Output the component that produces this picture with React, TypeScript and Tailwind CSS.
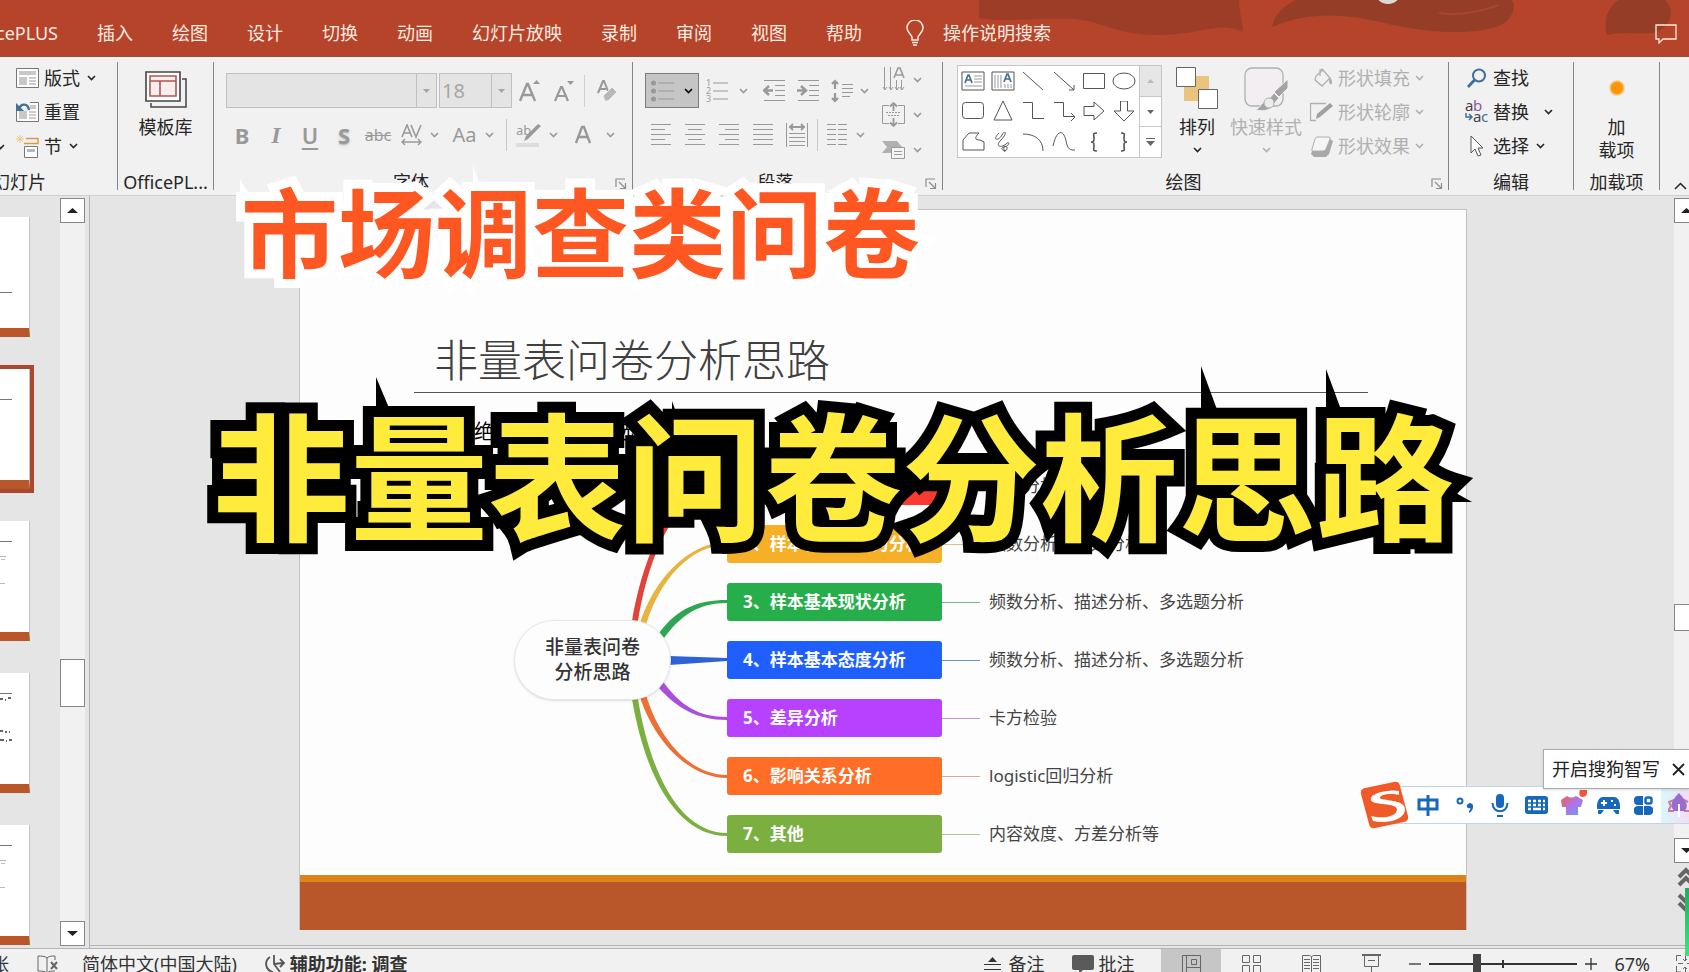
import type { ReactNode } from "react";
import clsx from "clsx";

const tabs = [
  "插入",
  "绘图",
  "设计",
  "切换",
  "动画",
  "幻灯片放映",
  "录制",
  "审阅",
  "视图",
  "帮助",
];

const branches = [
  { title: "1、样本背景信息分析", leaf: "频数分析", box: "bg-[#f93a31]", line: "bg-[#e08078]" },
  { title: "2、样本特征、行为分析", leaf: "频数分析、描述分析", box: "bg-[#f5b027]", line: "bg-[#e0c07a]" },
  { title: "3、样本基本现状分析", leaf: "频数分析、描述分析、多选题分析", box: "bg-[#25ae4a]", line: "bg-[#6cbb88]" },
  { title: "4、样本基本态度分析", leaf: "频数分析、描述分析、多选题分析", box: "bg-[#1f5fff]", line: "bg-[#6b93c8]" },
  { title: "5、差异分析", leaf: "卡方检验", box: "bg-[#b840ff]", line: "bg-[#c793d6]" },
  { title: "6、影响关系分析", leaf: "logistic回归分析", box: "bg-[#ff6d26]", line: "bg-[#e3a58c]" },
  { title: "7、其他", leaf: "内容效度、方差分析等", box: "bg-[#7bb041]", line: "bg-[#adc690]" },
];

const curves = [
  { fill: "#e0433a", d: "M3 154C17 72 50 17 98 17v3C53 20 22 75 9 154z" },
  { fill: "#e8b440", d: "M11 156C25 112 60 75 98 75v3C62 78 31 112 17 158z" },
  { fill: "#2ea654", d: "M30 166C48 142 68 133 98 133v3C70 136 51 148 33 174z" },
  { fill: "#2f62d8", d: "M40 189L98 191v3L40 198z" },
  { fill: "#a94fdc", d: "M33 213C51 239 70 250 98 250v3C68 253 48 241 30 221z" },
  { fill: "#ec7036", d: "M17 228C31 274 62 308 98 308v3C60 311 25 274 11 230z" },
  { fill: "#7bb041", d: "M9 232C22 311 53 366 98 366v3C50 369 17 314 3 232z" },
];

function Svg({
  w,
  h,
  children,
  className,
}: {
  w: number;
  h: number;
  children: ReactNode;
  className?: string;
}) {
  return (
    <svg
      width={w}
      height={h}
      viewBox={`0 0 ${w} ${h}`}
      fill="none"
      stroke="currentColor"
      aria-hidden="true"
      className={clsx("shrink-0", className)}
    >
      {children}
    </svg>
  );
}

function Chevron({ className }: { className?: string }) {
  return (
    <Svg w={9} h={6} className={className}>
      <path d="M1 1l3.500 3.500L8 1" strokeWidth="1.600" />
    </Svg>
  );
}

function Launcher() {
  return (
    <button aria-label="更多选项" className="text-[#8c8c8c]">
      <Svg w={12} h={12}>
        <path d="M1 9V1h9M4 4l6 6M10.500 5v5.500H5" strokeWidth="1.200" />
      </Svg>
    </button>
  );
}

function Group({
  label,
  className,
  launcher,
  children,
}: {
  label: string;
  className?: string;
  launcher?: boolean;
  children: ReactNode;
}) {
  return (
    <section
      className={clsx(
        "relative flex h-32 shrink-0 flex-col border-r border-[#858585]",
        className,
      )}
    >
      <div className="flex min-h-0 flex-1">{children}</div>
      <h2
        className={clsx(
          "text-center text-lg leading-4 whitespace-nowrap",
          launcher && "pr-6",
        )}
      >
        {label}
      </h2>
      {launcher && (
        <div className="absolute right-[5px] bottom-0 flex">
          <Launcher />
        </div>
      )}
    </section>
  );
}

function IconButton({
  label,
  className,
  children,
}: {
  label: string;
  className?: string;
  children: ReactNode;
}) {
  return (
    <button
      aria-label={label}
      className={clsx(
        "flex h-8 shrink-0 items-center justify-center gap-2",
        className,
      )}
    >
      {children}
    </button>
  );
}

function MenuItem({
  icon,
  label,
  chevron,
}: {
  icon: ReactNode;
  label: string;
  chevron?: string;
}) {
  return (
    <button className="flex h-8 items-center gap-[5px] text-lg whitespace-nowrap">
      <span className="flex w-[23px] justify-center">{icon}</span>
      {label}
      {chevron && <Chevron className={chevron} />}
    </button>
  );
}

function Combo({
  label,
  value,
  className,
}: {
  label: string;
  value: string;
  className: string;
}) {
  return (
    <div
      className={clsx(
        "relative flex h-[35px] shrink-0 border border-[#c0c0c0] bg-[#e4e4e4]",
        className,
      )}
    >
      <select
        aria-label={label}
        disabled
        className="w-full appearance-none bg-transparent pl-0.5 text-xl text-[#a6a6a6] opacity-100"
      >
        <option>{value}</option>
      </select>
      <span className="pointer-events-none absolute inset-y-0 right-0 flex w-5 items-center justify-center border-l border-[#c0c0c0] text-[#a6a6a6]">
        <Svg w={7} h={4}>
          <path d="M0 0h7L3.500 4z" fill="currentColor" stroke="none" />
        </Svg>
      </span>
    </div>
  );
}

function Lines({ rows }: { rows: [number, number][] }) {
  return (
    <Svg w={22} h={22}>
      {rows.map(([from, to], i) => (
        <path key={i} d={`M${from} ${i * 5 + 0.5}H${to}`} />
      ))}
    </Svg>
  );
}

function TitleBar() {
  return (
    <header className="relative flex h-[57px] shrink-0 items-center overflow-hidden border-b border-[#98503f] bg-[#b5442a] text-lg whitespace-nowrap text-[#fdeae0]">
      <svg
        width="720"
        height="57"
        viewBox="0 0 720 57"
        className="absolute top-0 right-0"
        aria-hidden="true"
      >
        <g fill="#963d27">
          <path d="M10 0h260c0 12 4 20 4 32-24-12-42 4-90 3-40-1-50-14-80-16-34-2-70 4-94-1z" opacity=".8" />
          <path d="M303 27C306 12 316 6 326 0h216c6 4 2 18-8 24-24 12-74 9-110 1-40-10-80-16-121 2z" />
          <path d="M638 35c-4-14 0-28 12-35h46c10 10 6 22-2 28-8 10-36 2-56 7z" />
        </g>
        <path d="M470 13c24 3 42-2 60-8" stroke="#a84630" strokeWidth="2" fill="none" />
        <circle cx="419" cy="-9" r="13" fill="#dcd8d6" />
      </svg>
      <nav className="relative flex items-center pt-2.5">
        <a href="#home" className="flex w-[58px] justify-end">
          OfficePLUS
        </a>
        {tabs.map((tab) => (
          <a key={tab} href={`#${tab}`} className="ml-[39px]">
            {tab}
          </a>
        ))}
        <a href="#search" className="ml-11 flex items-center gap-[19px]">
          <Svg w={18} h={26}>
            <path
              d="M6 20v-3C5 14 1 12 1 8a8 8 0 0116 0c0 4-4 6-5 9v3zM6 22.500h6M7 25h4"
              strokeWidth="1.500"
            />
          </Svg>
          操作说明搜索
        </a>
      </nav>
      <button aria-label="批注" className="relative mt-3 mr-3 ml-auto">
        <Svg w={22} h={20}>
          <path d="M1 1h20v14H8l-4 4v-4H1z" strokeWidth="1.300" />
        </Svg>
      </button>
    </header>
  );
}

function SlideIcon({ children }: { children?: ReactNode }) {
  return (
    <Svg w={23} h={20}>
      <path d="M.500.500h22v19H.500z" fill="#fff" stroke="#777" />
      <path d="M3 3h17v4H3zM3 9h8v8H3z" fill="#c8c8c8" stroke="none" />
      <path d="M13 10h7M13 13h7M13 16h7" stroke="#999" />
      {children}
    </Svg>
  );
}

function FontGroup() {
  return (
    <Group label="字体" className="w-[419px]" launcher>
      <div className="flex flex-col pt-[11px] text-[#999]">
        <div className="flex items-center pl-3">
          <Combo label="字体" value="" className="w-[211px]" />
          <Combo label="字号" value="18" className="ml-0.5 w-[73px]" />
          <IconButton label="增大字号" className="w-9">
            <Svg w={22} h={24}>
              <path d="M1 22L8 5h1l7 17M4 16h10" strokeWidth="2.400" />
              <path d="M14 5l3.500-4L21 5z" fill="currentColor" stroke="none" />
            </Svg>
          </IconButton>
          <IconButton label="减小字号" className="w-8">
            <Svg w={20} h={24}>
              <path d="M1 22L7 8h1l6 14M4 17h8" strokeWidth="2.200" />
              <path d="M13 2h7l-3.500 4z" fill="currentColor" stroke="none" />
            </Svg>
          </IconButton>
          <span className="ml-1 h-8 w-px bg-[#d0d0d0]" />
          <IconButton label="清除格式" className="w-11">
            <Svg w={20} h={22}>
              <path d="M1 13L6 1h1l4 10M3 9h6" strokeWidth="2" />
              <path d="M6 16l9-9 5 5-9 9H8z" fill="#b8b8b8" stroke="#f1f1f1" />
            </Svg>
          </IconButton>
        </div>
        <div className="mt-[11px] flex items-center pl-[11px]">
          <IconButton label="加粗" className="w-[34px] text-[22px] font-bold">
            B
          </IconButton>
          <IconButton
            label="倾斜"
            className="w-[34px] font-['Liberation_Serif',serif] text-2xl font-bold italic"
          >
            I
          </IconButton>
          <IconButton
            label="下划线"
            className="w-[34px] text-[22px] font-semibold underline underline-offset-4"
          >
            U
          </IconButton>
          <IconButton
            label="阴影"
            className="w-[34px] text-[22px] font-bold text-shadow-md"
          >
            S
          </IconButton>
          <IconButton label="删除线" className="w-[34px] text-base line-through">
            abc
          </IconButton>
          <IconButton label="字符间距" className="w-[50px]">
            <Svg w={21} h={22}>
              <path d="M1 13L6 1l5 12M3 9h6M10 1l5 12 5-12" strokeWidth="1.600" />
              <path d="M1 18h19M4 15l-3 3 3 3M17 15l3 3-3 3" strokeWidth="1.400" />
            </Svg>
            <Chevron />
          </IconButton>
          <IconButton label="更改大小写" className="w-14 gap-1.5 text-xl">
            Aa
            <Chevron />
          </IconButton>
          <span className="ml-[5px] h-8 w-px bg-[#c8c8c8]" />
          <IconButton label="突出显示" className="ml-2 w-11">
            <Svg w={25} h={24}>
              <text x="0" y="12" fontSize="13" fill="currentColor" stroke="none">
                ab
              </text>
              <path d="M22 1l3 2-13 13-4 2 2-5z" fill="currentColor" stroke="none" />
              <path d="M0 20h23v4H0z" fill="#ddd" stroke="none" />
            </Svg>
            <Chevron />
          </IconButton>
          <IconButton label="字体颜色" className="ml-3.5 gap-[15px] pl-0.5">
            <Svg w={16} h={22}>
              <path d="M1 19L7 3h2l6 16M4 13h8" strokeWidth="2.400" />
            </Svg>
            <Chevron />
          </IconButton>
        </div>
      </div>
    </Group>
  );
}

function ParagraphGroup() {
  return (
    <Group label="段落" className="w-[310px]" launcher>
      <div className="flex flex-col pt-[11px] text-[#999]">
        <div className="flex h-[35px] items-center pl-3">
          <button
            aria-label="项目符号"
            className="flex h-[35px] w-[54px] items-center justify-center gap-2.5 border border-[#7c7c7c] bg-[#c5c5c5]"
          >
            <Svg w={23} h={22}>
              <path d="M7 3h16M7 11h16M7 19h16" />
              <g fill="currentColor" stroke="none">
                <circle cx="2.500" cy="3" r="2.500" />
                <circle cx="2.500" cy="11" r="2.500" />
                <circle cx="2.500" cy="19" r="2.500" />
              </g>
            </Svg>
            <Chevron className="text-black" />
          </button>
          <IconButton label="编号" className="ml-[7px] gap-[11px]">
            <Svg w={22} h={24}>
              <path d="M7 4h15M7 12h15M7 20h15" />
              <g fontSize="9" fill="currentColor" stroke="none">
                <text x="0" y="7">1</text>
                <text x="0" y="15">2</text>
                <text x="0" y="23">3</text>
              </g>
            </Svg>
            <Chevron />
          </IconButton>
          <IconButton label="减少缩进" className="ml-[15px]">
            <Svg w={22} h={22}>
              <path d="M1 .500h21M12 5.500h10M12 10.500h10M12 15.500h10M1 20.500h21" />
              <path d="M10 10.500H2M6 6l-5 4.500L6 15" strokeWidth="2.500" />
            </Svg>
          </IconButton>
          <IconButton label="增加缩进" className="ml-3">
            <Svg w={22} h={22}>
              <path d="M1 .500h21M12 5.500h10M12 10.500h10M12 15.500h10M1 20.500h21" />
              <path d="M0 10.500h8M4 6l5 4.500L4 15" strokeWidth="2.500" />
            </Svg>
          </IconButton>
          <IconButton label="行距" className="ml-3 gap-[7px]">
            <Svg w={22} h={24}>
              <path d="M11 5.500h11M11 9.500h11M11 13.500h11M11 17.500h8" />
              <path d="M4 2v8M1 5l3-3 3 3M4 14v8M1 19l3 3 3-3" strokeWidth="2.200" />
            </Svg>
            <Chevron />
          </IconButton>
        </div>
        <div className="mt-[11px] flex items-center pl-[11px]">
          <IconButton label="左对齐" className="w-[34px]">
            <Lines rows={[[1, 21], [1, 15], [1, 21], [1, 15], [1, 21]]} />
          </IconButton>
          <IconButton label="居中" className="w-[34px]">
            <Lines rows={[[1, 21], [4, 18], [1, 21], [4, 18], [1, 21]]} />
          </IconButton>
          <IconButton label="右对齐" className="w-[34px]">
            <Lines rows={[[1, 21], [7, 21], [1, 21], [7, 21], [1, 21]]} />
          </IconButton>
          <IconButton label="两端对齐" className="w-[34px]">
            <Lines rows={[[1, 21], [1, 21], [1, 21], [1, 21], [1, 21]]} />
          </IconButton>
          <IconButton label="分散对齐" className="w-[34px]">
            <Svg w={22} h={24}>
              <path d="M.500 0v24M21.500 0v24M3 10.500h16M3 14.500h16M3 18.500h16M3 22.500h16" />
              <path d="M3 4h16M7 1L4 4l3 3M15 1l3 3-3 3" strokeWidth="1.800" />
            </Svg>
          </IconButton>
          <span className="ml-[3px] h-8 w-px bg-[#c8c8c8]" />
          <IconButton label="分栏" className="ml-2">
            <Svg w={22} h={22}>
              <path d="M1 .500h9M12 .500h9M1 5.500h9M12 5.500h9M1 10.500h9M12 10.500h9M1 15.500h9M12 15.500h9M1 20.500h9M12 20.500h9" />
            </Svg>
            <Chevron />
          </IconButton>
        </div>
      </div>
      <div className="ml-auto flex flex-col pr-5 text-[#999]">
        <IconButton label="文字方向" className="h-[35px]">
          <Svg w={23} h={25}>
            <path d="M2.500 0v23M8.500 0v23M14.500 13v10M19.500 13v10M1 20l2 3 2-3M7 20l2 3 2-3M13 20l2 3 2-3M18 20l2 3 2-3" />
            <path d="M12 11l4-10h2l4 10M14 8h6" strokeWidth="1.600" />
          </Svg>
          <Chevron />
        </IconButton>
        <IconButton label="对齐文本" className="h-[35px]">
          <Svg w={23} h={25}>
            <path d="M7 3.500H.500v18H7M16 3.500h6.500v18H16" />
            <path d="M4 10.500h15M6 13.500h11" strokeDasharray="2 1" />
            <path d="M11.500 1v8M8 4.500L11.500 1 15 4.500M11.500 16v8M8 20.500l3.500 3.500 3.500-3.500" strokeWidth="1.800" />
          </Svg>
          <Chevron />
        </IconButton>
        <IconButton label="转换为 SmartArt" className="h-[35px]">
          <Svg w={23} h={20}>
            <path d="M0 1h15l5 6-5 6H0l5-6z" fill="#b0b0b0" stroke="none" />
            <path d="M9.500 7.500h13v11h-13z" fill="#f4f4f4" />
            <path d="M12 11.500h8M12 14.500h8" />
          </Svg>
          <Chevron />
        </IconButton>
      </div>
    </Group>
  );
}

const shapes: { name: string; icon: ReactNode }[] = [
  {
    name: "文本框",
    icon: (
      <>
        <path d="M1 1h22v18H1z" fill="#fff" />
        <path d="M13 5h8M13 8h8M13 11h8M4 15h17" stroke="#999" />
        <path d="M4 12l3-8h1l3 8M5 9h5" stroke="#3d7195" strokeWidth="1.700" />
      </>
    ),
  },
  {
    name: "竖排文本框",
    icon: (
      <>
        <path d="M1 1h22v18H1z" fill="#fff" />
        <path d="M4 4v13M7 4v13M10 4v13M14 13v4M17 13v4M20 13v4" stroke="#999" />
        <path d="M13 11l3-8h1l3 8M14 8h5" stroke="#3d7195" strokeWidth="1.700" />
      </>
    ),
  },
  { name: "直线", icon: <path d="M2 1l20 18" /> },
  { name: "箭头", icon: <path d="M2 1l20 18M22 14v5h-5" /> },
  { name: "矩形", icon: <path d="M1.500 2.500h21v15h-21z" /> },
  { name: "椭圆", icon: <ellipse cx="12" cy="10" rx="11" ry="8" /> },
  { name: "圆角矩形", icon: <rect x="1.500" y="1.500" width="21" height="16" rx="3" /> },
  { name: "三角形", icon: <path d="M12 0l9 19H3z" /> },
  { name: "肘形连接符", icon: <path d="M2 1.500h9.500v16H23" /> },
  { name: "肘形箭头", icon: <path d="M2 1.500h9.500v14H23M19 12l4 4-4 4" /> },
  { name: "右箭头", icon: <path d="M2 5.500h10V1l10 9-10 9v-4.500H2z" /> },
  { name: "下箭头", icon: <path d="M8.500 0h7v10H22L12 20 2 10h6.500z" /> },
  { name: "任意多边形", icon: <path d="M2 8l6-7h10c-5 5-4 7 1 7l4 2v8H2z" /> },
  {
    name: "自由曲线",
    icon: <path d="M8 1c-8 8 0 8 3 2s6-2-1 5 1 8 5 4 4 2-2 3 2 6 3 2-6-4-2 3" />,
  },
  { name: "弧形", icon: <path d="M2 2c12 0 20 6 20 17" /> },
  { name: "曲线", icon: <path d="M1 14C5-4 12-2 14 9c2 9 4 9 9 9" /> },
  {
    name: "左大括号",
    icon: <path d="M15 1c-5 0-3 2-3 5s0 4-3 4c3 0 3 1 3 4s-2 5 3 5" strokeWidth="1.600" />,
  },
  {
    name: "右大括号",
    icon: <path d="M9 1c5 0 3 2 3 5s0 4 3 4c-3 0-3 1-3 4s2 5-3 5" strokeWidth="1.600" />,
  },
];

function DrawingGroup() {
  return (
    <Group label="绘图" className="w-[506px]" launcher>
      <div className="mt-[3px] ml-3.5 flex h-[93px] w-[205px] shrink-0 border border-[#c6c6c6] bg-white">
        <div className="grid flex-1 grid-cols-6 grid-rows-3 text-[#555]">
          {shapes.map((shape) => (
            <button
              key={shape.name}
              aria-label={shape.name}
              className="flex items-center justify-center"
            >
              <Svg w={24} h={20}>
                {shape.icon}
              </Svg>
            </button>
          ))}
        </div>
        <div className="flex w-[22px] flex-col divide-y divide-[#c6c6c6] border-l border-[#c6c6c6] text-[#666]">
          <button aria-label="上一行" className="flex flex-1 items-center justify-center bg-[#e6e6e6] text-[#bbb]">
            <Svg w={7} h={4}>
              <path d="M0 4h7L3.500 0z" fill="currentColor" stroke="none" />
            </Svg>
          </button>
          <button aria-label="下一行" className="flex flex-1 items-center justify-center">
            <Svg w={7} h={4}>
              <path d="M0 0h7L3.500 4z" fill="currentColor" stroke="none" />
            </Svg>
          </button>
          <button aria-label="其他形状" className="flex flex-1 items-center justify-center">
            <Svg w={9} h={8}>
              <path d="M0 .500h9" />
              <path d="M0 3h9L4.500 8z" fill="currentColor" stroke="none" />
            </Svg>
          </button>
        </div>
      </div>
      <button className="ml-3.5 flex w-[42px] shrink-0 flex-col items-center pt-[5px] text-lg whitespace-nowrap">
        <Svg w={42} h={42}>
          <path d="M20 9h13v13H20zM8 20h14v14H8z" fill="#e9c47c" stroke="none" />
          <path d="M.500.500h19v19H.500zM22.500 22.500h19v19h-19z" fill="#fff" stroke="#666" />
        </Svg>
        <span className="mt-1.5 leading-6">排列</span>
        <Chevron className="mt-2" />
      </button>
      <button className="ml-2.5 flex w-[76px] shrink-0 flex-col items-center pt-[5px] text-lg whitespace-nowrap text-[#b0b0b0]">
        <Svg w={44} h={44}>
          <rect x="1" y="1" width="38" height="38" rx="7" fill="#f3eef2" strokeWidth="1.300" />
          <path d="M44 12v9l-9 9-5-5z" fill="#a3a3a3" stroke="#f1f1f1" />
          <path d="M24 33l6-7 5 5-6 7c-4 7-12 6-17 5 5-3 6-9 12-10z" fill="#a3a3a3" stroke="#f1f1f1" />
          <circle cx="25" cy="36" r="5" fill="#ececec" />
        </Svg>
        <span className="mt-1 leading-6">快速样式</span>
        <Chevron className="mt-2" />
      </button>
      <div className="flex flex-col gap-0.5 pl-1.5 text-[#b0b0b0]">
        <MenuItem
          label="形状填充"
          chevron="ml-0"
          icon={
            <Svg w={22} h={20}>
              <path d="M5 8l7-6 7 8-8 8-7-6zM9 8V2l3-1" strokeWidth="1.300" />
              <path d="M19 10c2 3 2 5 1 6s-2-3-1-6" fill="currentColor" />
            </Svg>
          }
        />
        <MenuItem
          label="形状轮廓"
          chevron="ml-0"
          icon={
            <Svg w={23} h={20}>
              <path d="M16 1.500H.500v17H6" strokeWidth="1.300" />
              <path d="M20 1l3 3-13 11-4 2 1-5z" fill="#a0a0a0" stroke="none" />
            </Svg>
          }
        />
        <MenuItem
          label="形状效果"
          chevron="ml-0"
          icon={
            <Svg w={23} h={21}>
              <path d="M6 3h14l3 2-4 13-3 3H4l-3-3z" fill="#a8a8a8" stroke="none" />
              <path d="M7 1h12q2 0 1 2l-4 10q-1 2-3 2H3q-2 0-1-2L5 3q1-2 2-2z" fill="#f5f5f5" />
            </Svg>
          }
        />
      </div>
    </Group>
  );
}

function Ribbon() {
  return (
    <div className="flex h-[139px] shrink-0 overflow-hidden border-b border-[#cfcfcf] bg-[#f1f1f1] pt-[5px] text-[#262626]">
      <section className="flex h-32 w-[118px] shrink-0 flex-col border-r border-[#858585]">
        <div className="flex flex-1">
          <button aria-label="新建幻灯片" className="flex w-4 items-end pb-6">
            <Chevron className="-ml-1" />
          </button>
          <div className="flex flex-col items-start gap-0.5">
            <MenuItem label="版式" chevron="ml-0.5" icon={<SlideIcon />} />
            <MenuItem
              label="重置"
              icon={
                <SlideIcon>
                  <path d="M0 0h14v9H0z" fill="#f1f1f1" stroke="none" />
                  <path d="M3 7c2-6 9-6 10 1" stroke="#3d7195" strokeWidth="2.400" />
                  <path d="M0 1v8h8z" fill="#3d7195" stroke="none" />
                </SlideIcon>
              }
            />
            <MenuItem
              label="节"
              chevron="ml-0.5"
              icon={
                <Svg w={23} h={23}>
                  <path d="M4 0v8M0 4h8M1 1l6 6M7 1L1 7" stroke="#ecc889" />
                  <path d="M10 3.500h12v5H8" stroke="#d99a4e" strokeWidth="1.400" />
                  <path d="M8.500 11.500h13v11h-13z" fill="#fff" stroke="#777" />
                  <path d="M11 15.500h8" stroke="#a9bccb" strokeWidth="3" />
                </Svg>
              }
            />
          </div>
        </div>
        <h2 className="flex w-[46px] justify-end text-lg leading-4 whitespace-nowrap">
          幻灯片
        </h2>
      </section>

      <Group label="OfficePL..." className="w-24">
        <button className="flex w-full flex-col items-center pt-[9px] text-lg">
          <Svg w={42} h={37}>
            <path d="M37 8h4v28H6v-4" stroke="#444" strokeWidth="1.500" />
            <path d="M1 1h34v29H1z" fill="#fff" stroke="#444" strokeWidth="1.600" />
            <path d="M5 5h26v20H5zM5 10h26M15 10v15" fill="#f9eeee" stroke="#b2564e" strokeWidth="1.600" />
          </Svg>
          <span className="mt-[7px] leading-6">模板库</span>
        </button>
      </Group>

      <FontGroup />
      <ParagraphGroup />
      <DrawingGroup />

      <Group label="编辑" className="w-[125px]">
        <div className="flex flex-col items-start gap-0.5 pl-4">
          <MenuItem
            label="查找"
            icon={
              <Svg w={20} h={20} className="text-[#3f6f9b]">
                <circle cx="12" cy="7.500" r="6" strokeWidth="2" />
                <path d="M7.500 12L1 19" strokeWidth="2.800" />
              </Svg>
            }
          />
          <MenuItem
            label="替换"
            chevron="ml-2.5"
            icon={
              <Svg w={23} h={24}>
                <g fontSize="15" stroke="none">
                  <text x="0" y="11" fill="#444">a</text>
                  <text x="8" y="11" fill="#8a5a9c">b</text>
                  <text x="8" y="22" fill="#444">a</text>
                  <text x="16" y="22" fill="#3f6f9b">c</text>
                </g>
                <path d="M1 13v4h5M4 14l3 3-3 3" stroke="#3f6f9b" strokeWidth="1.500" />
              </Svg>
            }
          />
          <MenuItem
            label="选择"
            chevron="ml-0.5"
            icon={
              <Svg w={14} h={22}>
                <path d="M1 1v17l4-4 3 7 3-1-3-7h5z" fill="#fff" stroke="#555" />
              </Svg>
            }
          />
        </div>
      </Group>

      <Group label="加载项" className="w-[86px]">
        <button className="flex w-full flex-col items-center pt-[18px] text-lg">
          <Svg w={16} h={16}>
            <circle cx="8" cy="8" r="7" fill="#fb960c" stroke="#fbc67c" strokeWidth="1.500" />
          </Svg>
          <span className="mt-5 text-center leading-[23px]">
            加<br />
            载项
          </span>
        </button>
      </Group>
      <button aria-label="折叠功能区" className="ml-auto flex h-32 items-end pr-0.5">
        <Svg w={13} h={8}>
          <path d="M1 7l5.500-5.500L12 7" strokeWidth="1.500" />
        </Svg>
      </button>
    </div>
  );
}

function ScrollArrow({ up, label }: { up?: boolean; label: string }) {
  return (
    <button
      aria-label={label}
      className="flex h-[25px] w-[25px] shrink-0 items-center justify-center border border-[#868686] bg-white text-[#222]"
    >
      <Svg w={11} h={5}>
        <path d={up ? "M0 5h11L5.500 0z" : "M0 0h11L5.500 5z"} fill="currentColor" stroke="none" />
      </Svg>
    </button>
  );
}

function Thumbnails() {
  const lines = ["pt-[75px]", "pt-[30px]", "pt-5", "pt-5", "pt-5"];

  return (
    <aside className="flex w-[90px] shrink-0 border-r border-[#b4b4b4]">
      <div className="flex w-[60px] flex-col items-start gap-8 overflow-hidden pt-[21px]">
        {lines.map((pad, i) => (
          <button
            key={i}
            aria-label={`幻灯片 ${i + 1}`}
            className={clsx(
              "flex h-[120px] w-[30px] shrink-0 flex-col border-r border-b-[9px] border-r-[#c4c4c4] border-b-[#b9572a] bg-white",
              i === 1 && "outline-4 outline-[#a9482f]",
              pad,
            )}
          >
            <span className="h-px w-3 bg-[#777]" />
            {i > 1 && (
              <svg width="14" height="76" viewBox="0 0 14 76" fill="none" aria-hidden="true">
                {i === 3 ? (
                  <path
                    d="M0 5h3M5 6h1M8 4h3M0 37h3M5 38h2M9 38h1M0 46h4M6 47h1M9 46h3"
                    stroke="#333"
                    strokeWidth="1.500"
                  />
                ) : (
                  <path d="M0 14.500h6M1 17.500h4M0 41.500h5" stroke="#bbb" />
                )}
              </svg>
            )}
          </button>
        ))}
      </div>
      <div className="mt-0.5 mb-0.5 flex w-[25px] flex-col bg-[#f1f1f1]">
        <ScrollArrow up label="向上滚动" />
        <div className="mt-[436px] h-12 border border-[#868686] bg-white" />
        <div className="mt-auto flex">
          <ScrollArrow label="向下滚动" />
        </div>
      </div>
    </aside>
  );
}

function MindMap() {
  return (
    <div className="mt-[23px] ml-[214px] flex items-center">
      <div className="relative z-10 flex h-20 w-[157px] shrink-0 items-center justify-center rounded-[40px] border border-[#e8e8e8] bg-[#fdfdfd] text-center text-[19px] leading-[25px] font-medium text-[#333] shadow-sm">
        非量表问卷
        <br />
        分析思路
      </div>
      <svg
        width="98"
        height="386"
        viewBox="0 0 98 386"
        className="-ml-[42px] shrink-0"
        aria-hidden="true"
      >
        {curves.map((curve) => (
          <path key={curve.fill} d={curve.d} fill={curve.fill} />
        ))}
      </svg>
      <ul className="flex flex-col gap-5">
        {branches.map((branch) => (
          <li key={branch.title} className="flex items-center whitespace-nowrap">
            <div
              className={clsx(
                "flex h-[38px] w-[215px] items-center rounded-[3px] pl-4 text-[17px] font-bold text-white",
                branch.box,
              )}
            >
              {branch.title}
            </div>
            <span className={clsx("h-px w-[38px]", branch.line)} />
            <span className="ml-[9px] text-[17px] text-[#444]">{branch.leaf}</span>
          </li>
        ))}
      </ul>
    </div>
  );
}

function Slide() {
  return (
    <article className="mt-[13px] mb-[15px] ml-[209px] flex flex-1 flex-col overflow-hidden border border-b-0 border-[#c2c2c2] bg-[#fdfdfd]">
      <h1 className="mt-[121px] mr-[98px] ml-[114px] border-b border-[#555] pb-[3px] pl-5 text-[44px] leading-[58px] font-light text-[#404040]">
        非量表问卷分析思路
      </h1>
      <p className="mt-[27px] ml-[174px] text-xl leading-6 text-black">
        绝大多数题为单选题或者多选题
      </p>
      <MindMap />
      <div className="mt-auto h-[55px] shrink-0 border-t-[7px] border-[#dd8319] bg-[#b9572a]" />
    </article>
  );
}

function Editor() {
  return (
    <main className="flex min-h-0 flex-1 bg-[#e5e5e5]">
      <Thumbnails />
      <div className="mb-0.5 flex min-w-0 flex-1 border-b border-[#b4b4b4]">
        <Slide />
        <div className="mt-0.5 ml-[207px] flex w-[15px] shrink-0 flex-col overflow-hidden">
          <div className="flex h-[665px] flex-col bg-[#f1f1f1]">
            <ScrollArrow up label="上一页" />
            <div className="mt-[381px] h-[27px] w-[25px] border border-[#868686] bg-white" />
            <div className="mt-auto">
              <ScrollArrow label="下一页" />
            </div>
          </div>
          <Svg w={25} h={46} className="mt-1 text-[#666]">
            <path d="M5 10l7-7 7 7M5 18l7-7 7 7M5 28l7 7 7-7M5 36l7 7 7-7" strokeWidth="4" />
          </Svg>
        </div>
      </div>
    </main>
  );
}

function ViewButton({
  label,
  active,
  children,
}: {
  label: string;
  active?: boolean;
  children: ReactNode;
}) {
  return (
    <button
      aria-label={label}
      className={clsx(
        "flex h-full w-[60px] items-center justify-center text-[#666]",
        active && "bg-[#c6c6c6]",
      )}
    >
      {children}
    </button>
  );
}

function StatusBar() {
  return (
    <footer className="h-6 shrink-0 border-t border-[#b4b4b4] bg-[#f1f1f1] text-lg whitespace-nowrap text-[#333]">
      <div className="flex h-[30px] items-center">
        <span className="flex w-[9px] justify-end">第2张</span>
        <button aria-label="拼写检查" className="ml-7 text-[#666]">
          <Svg w={21} h={18}>
            <path d="M10 3C8 1 4 1 1 1v15c3 0 7 0 9 2 2-2 5-2 8-2M10 3v14M10 3c2-2 5-2 8-2v4" />
            <path d="M14 7l6 7M20 7l-6 7" strokeWidth="2" />
          </Svg>
        </button>
        <button className="ml-6">简体中文(中国大陆)</button>
        <button className="ml-7 flex items-center gap-1 font-bold">
          <Svg w={21} h={19} className="text-[#555]">
            <path d="M5 2C-1 6 0 15 8 17M9 0v9l6 8M9 9l9-1M15 4l4 4-4 4" strokeWidth="1.800" />
          </Svg>
          辅助功能: 调查
        </button>
        <button className="ml-auto flex items-center gap-[7px]">
          <Svg w={17} h={14}>
            <path d="M0 7.500h17M0 12.500h17" />
            <path d="M4 5h9L8.500 0z" fill="currentColor" stroke="none" />
          </Svg>
          备注
        </button>
        <button className="ml-7 flex items-center gap-1">
          <Svg w={22} h={20} className="text-[#5a5a5a]">
            <path d="M2 1h18q2 0 2 2v11q0 2-2 2h-9l-4 4v-4H2q-2 0-2-2V3q0-2 2-2z" fill="currentColor" stroke="none" />
          </Svg>
          批注
        </button>
        <div className="ml-[27px] flex h-full">
          <ViewButton label="普通视图" active>
            <Svg w={19} h={18}>
              <path d="M.500.500h18v17H.500zM4.500 1v17M5 12.500h13M9.500 4.500h5v5h-5z" />
            </Svg>
          </ViewButton>
          <ViewButton label="幻灯片浏览">
            <Svg w={19} h={18}>
              <path d="M.500.500h7v7h-7zM11.500.500h7v7h-7zM.500 10.500h7v7h-7zM11.500 10.500h7v7h-7z" />
            </Svg>
          </ViewButton>
          <ViewButton label="阅读视图">
            <Svg w={19} h={18}>
              <path d="M9.500 2v16M.500.500h7l2 1 2-1h7v17h-18zM2 4.500h6M2 7.500h6M2 10.500h6M2 13.500h6M11 4.500h6M11 7.500h6M11 10.500h6M11 13.500h6" />
            </Svg>
          </ViewButton>
          <ViewButton label="幻灯片放映">
            <Svg w={19} h={20}>
              <path d="M0 1h19" strokeWidth="2" />
              <path d="M2.500 2v10.500h14V2M9.500 13v6M6 6.500h7" />
            </Svg>
          </ViewButton>
        </div>
        <button aria-label="缩小" className="ml-2">
          <Svg w={12} h={12}>
            <path d="M0 6h12" strokeWidth="1.300" />
          </Svg>
        </button>
        <div className="relative ml-2 flex items-center">
          <input
            type="range"
            aria-label="缩放"
            defaultValue={31}
            className="h-5 w-[148px] appearance-none bg-[linear-gradient(#333,#333)] bg-[length:100%_2px] bg-center bg-no-repeat [&::-webkit-slider-thumb]:h-5 [&::-webkit-slider-thumb]:w-2 [&::-webkit-slider-thumb]:appearance-none [&::-webkit-slider-thumb]:bg-[#444]"
          />
          <span className="pointer-events-none absolute inset-x-0 mx-auto h-2 w-0.5 bg-[#333]" />
        </div>
        <button aria-label="放大" className="ml-2">
          <Svg w={12} h={12}>
            <path d="M0 6h12M6 0v12" strokeWidth="1.300" />
          </Svg>
        </button>
        <button className="ml-[17px]">67%</button>
        <button aria-label="适应窗口" className="ml-[26px] w-[13px] overflow-hidden">
          <Svg w={20} h={18} className="text-[#666]">
            <path d="M5 .500H.500V6M13 .500h5V6M.500 11v6H5M9.500 1v5M9.500 12v5M2 8.500h5M11 8.500h6M7 4l2 2 2-2M7 14l2-2 2 2" />
          </Svg>
        </button>
      </div>
    </footer>
  );
}

function InputMethodBar() {
  return (
    <div className="absolute right-0 bottom-[148px] flex h-[38px] w-[314px] items-center border-y border-[#c3d4e2] bg-white text-[#1668bd]">
      <Svg w={50} h={48} className="-ml-4">
        <path d="M6 7L35 1q5-1 6 4l8 30q1 5-4 6L16 47q-5 1-6-4L2 13q-1-5 4-6z" fill="#ee5a28" stroke="none" />
        <path
          d="M40 10c-9-2-30 2-28 9 1 6 27 2 26 10-1 7-15 9-26 6l2 5c14 3 32-1 32-12 0-10-24-8-25-11 0-4 12-5 19-3z"
          fill="#fff"
          stroke="none"
        />
      </Svg>
      <button aria-label="中文" className="ml-2">
        <Svg w={22} h={21}>
          <path d="M2 5h18v9H2zM11 0v21" strokeWidth="3" />
        </Svg>
      </button>
      <button aria-label="标点" className="ml-[17px]">
        <Svg w={18} h={18}>
          <circle cx="4" cy="5" r="2.500" strokeWidth="2" />
          <path d="M12 8a3 3 0 015 3c0 3-2 5-4 6v-2c1-1 2-2 1-3a2 2 0 01-2-4z" fill="currentColor" stroke="none" />
        </Svg>
      </button>
      <button aria-label="语音" className="ml-[17px]">
        <Svg w={18} h={23}>
          <rect x="5" y="0" width="8" height="14" rx="4" fill="currentColor" stroke="none" />
          <path d="M1.500 9c0 11 15 11 15 0M6 22h6" strokeWidth="2" />
        </Svg>
      </button>
      <button aria-label="软键盘" className="ml-4">
        <Svg w={23} h={18}>
          <rect x="0" y="0" width="23" height="18" rx="3" fill="currentColor" stroke="none" />
          <path d="M3 5h3M8 5h3M13 5h3M18 5h2M3 9h3M8 9h3M13 9h3M18 9h2M3 13h3M8 13h8M18 13h2" stroke="#fff" strokeWidth="2.500" />
        </Svg>
      </button>
      <button aria-label="皮肤" className="ml-3">
        <Svg w={27} h={30}>
          <defs>
            <linearGradient id="skin" x1="0" y1="0" x2="1" y2="1">
              <stop offset="0" stopColor="#f0604a" />
              <stop offset=".5" stopColor="#b074ee" />
              <stop offset="1" stopColor="#58a8f4" />
            </linearGradient>
          </defs>
          <path d="M1 10l6-4q4 3 9 0l7 4-2 7h-3v8H6v-8H2z" fill="url(#skin)" stroke="none" />
          <path d="M20 0h7q1 7-5 7-4-1-2-7z" fill="#f0553c" stroke="none" />
        </Svg>
      </button>
      <button aria-label="游戏" className="ml-2.5">
        <Svg w={23} h={19}>
          <path d="M6 1h11c4 0 6 5 6 9v3H0v-3c0-4 2-9 6-9zM1 14h6l-3 4H1zM22 14h-6l3 4h3z" fill="currentColor" stroke="none" />
          <path d="M4 7h6M7 4v6M14 5h2M17 9h2" stroke="#fff" strokeWidth="2" />
        </Svg>
      </button>
      <button aria-label="工具箱" className="ml-3.5">
        <Svg w={19} h={19}>
          <g fill="currentColor" stroke="none">
            <path d="M4 0h5v9H4a4 4 0 01-4-4V4a4 4 0 014-4zM4 10h5v9H4a4 4 0 010-9zM10 10h5a4 4 0 010 9h-5z" />
          </g>
          <rect x="11.500" y="1.500" width="6" height="6" rx="2" strokeWidth="2.500" />
        </Svg>
      </button>
      <div className="ml-2 flex h-full flex-1 items-center justify-end bg-linear-to-r from-[#d8f8fa] to-[#f3dcf4]">
        <Svg w={21} h={24}>
          <path d="M6 7l-5 2 2 4-3 5h6M16 7l4 2M16 18h5" stroke="#c77d9c" strokeWidth="2" />
          <path d="M11 0c7 8 10 12 6 18H6C1 12 4 7 11 0z" fill="#9a6bd0" stroke="none" />
          <path d="M11 11v13" stroke="#fff" strokeWidth="2" />
        </Svg>
      </div>
    </div>
  );
}

export default function App() {
  return (
    <div className="relative flex h-screen flex-col overflow-hidden bg-[#e5e5e5] font-['Noto_Sans','Noto_Sans_CJK_SC',sans-serif]">
      <TitleBar />
      <Ribbon />
      <Editor />
      <StatusBar />

      <InputMethodBar />
      <div className="absolute right-0 bottom-[183px] flex h-10 w-[146px] items-center border border-r-0 border-[#a5acb2] bg-white pl-2 text-lg whitespace-nowrap text-[#222] shadow-sm">
        开启搜狗智写
        <button aria-label="关闭" className="ml-3">
          <Svg w={13} h={13}>
            <path d="M1 1l11 11M12 1L1 12" strokeWidth="1.800" />
          </Svg>
        </button>
      </div>
      <div className="absolute right-0 bottom-4 h-[68px] w-1 bg-linear-to-b from-[#1fae5c] to-[#43e07e]" />

      {/* caption outlines run out into sharp spikes above some glyphs */}
      <svg
        width="1360"
        height="420"
        viewBox="0 0 1360 420"
        className="pointer-events-none absolute top-0 left-0"
        aria-hidden="true"
      >
        <path d="M473 165v30h10zM240 180v20h14z" fill="#fff" />
        <path d="M376 377v38h16zM672 401v14h5zM1201 366v49h18zM1326 369v46h17z" fill="#000" />
      </svg>
      <div className="pointer-events-none absolute top-[177px] left-[241px] text-[97px] leading-[110px] font-bold whitespace-nowrap text-[#ff5722] [-webkit-text-stroke:18px_white] [paint-order:stroke]">
        市场调查类问卷
      </div>
      <div className="pointer-events-none absolute top-[397px] left-[212px] text-[138px] leading-[158px] font-bold whitespace-nowrap text-[#ffeb3b] [-webkit-text-stroke:22px_black] [paint-order:stroke]">
        非量表问卷分析思路
      </div>
    </div>
  );
}
